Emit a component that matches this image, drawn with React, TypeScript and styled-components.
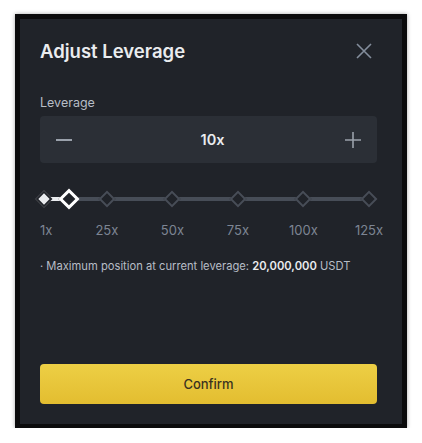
import React from "react";
import styled, { createGlobalStyle } from "styled-components";

const Global = createGlobalStyle`
  html, body { margin: 0; padding: 0; background: #ffffff; }
  body { font-family: Inter, "Noto Sans", sans-serif; }
  * { box-sizing: border-box; }
`;

const Frame = styled.div`
  margin: 14px 0 0 15px;
  width: 392px;
  height: 414px;
  border: 5px solid #0b0b0c;
  border-bottom-width: 4px;
  box-shadow: 0 0 4px rgba(0, 0, 0, 0.35);
  background: #202329;
`;

const Panel = styled.div`
  height: 100%;
  display: flex;
  flex-direction: column;
  padding: 20px 25px 20px 20px;
`;

const Header = styled.div`
  height: 24px;
  display: flex;
  align-items: center;
  justify-content: space-between;
`;

const Title = styled.h1`
  margin: 0;
  font-size: 18.5px;
  font-weight: 600;
  color: #eaecef;
  letter-spacing: 0;
`;

const CloseButton = styled.button`
  width: 24px;
  height: 24px;
  margin-right: 1px;
  padding: 0;
  border: 0;
  background: transparent;
  display: flex;
  align-items: center;
  justify-content: center;
`;

const Label = styled.div`
  margin-top: 32px;
  font-size: 12.5px;
  line-height: 16px;
  color: #b7bdc6;
`;

const Stepper = styled.div`
  margin-top: 5px;
  height: 47px;
  background: #2b2f36;
  border-radius: 4px;
  display: flex;
  align-items: center;
  justify-content: space-between;
  padding: 0 16px;
`;

const StepButton = styled.button`
  width: 16px;
  height: 16px;
  padding: 0;
  border: 0;
  background: transparent;
  display: flex;
  align-items: center;
  justify-content: center;
`;

const Value = styled.div`
  margin-left: 8px;
  font-size: 14.5px;
  font-weight: 600;
  color: #eaecef;
`;

const Slider = styled.div`
  position: relative;
  margin-top: 26px;
  height: 20px;
`;

const Track = styled.div`
  position: absolute;
  left: 4px;
  right: 7px;
  top: 8px;
  height: 4px;
  background: #474d57;
`;

const Fill = styled.div`
  position: absolute;
  left: 0;
  top: 0;
  height: 4px;
  background: #eaecef;
`;

const Mark = styled.div<{ $active?: boolean }>`
  position: absolute;
  top: 2px;
  width: 8px;
  height: 8px;
  transform: translate(-50%, -50%) rotate(45deg);
  background: ${(p) => (p.$active ? "#eaecef" : "#202329")};
  border: 2px solid ${(p) => (p.$active ? "#202329" : "#474d57")};
  box-sizing: content-box;
`;

const Thumb = styled.div`
  position: absolute;
  top: 2px;
  width: 9px;
  height: 9px;
  transform: translate(-50%, -50%) rotate(45deg);
  background: #202329;
  border: 3px solid #ffffff;
  box-sizing: content-box;
`;

const Ticks = styled.div`
  position: relative;
  margin-top: 13px;
  height: 16px;
`;

const Tick = styled.span<{ $first?: boolean }>`
  position: absolute;
  top: 0;
  font-size: 13px;
  line-height: 16px;
  color: #7d8593;
  white-space: nowrap;
  transform: ${(p) => (p.$first ? "none" : "translateX(-50%)")};
`;

const Info = styled.div`
  margin-top: 20px;
  font-size: 11.2px;
  line-height: 16px;
  color: #b7bdc6;
  white-space: nowrap;
`;

const Strong = styled.span`
  font-weight: 600;
  color: #eaecef;
`;

const Confirm = styled.button`
  margin-top: auto;
  height: 40px;
  width: 100%;
  border: 0;
  border-radius: 4px;
  background: linear-gradient(#edcf45, #e3bd30);
  color: #3a3220;
  font-family: inherit;
  font-size: 13px;
  font-weight: 500;
`;

const TRACK_WIDTH = 325;
const marks = [25, 50, 75, 100, 125];
const pos = (v: number) => ((v - 1) / 124) * TRACK_WIDTH;

export default function App() {
  const leverage = 10;
  return (
    <>
      <Global />
      <Frame>
        <Panel>
          <Header>
            <Title>Adjust Leverage</Title>
            <CloseButton aria-label="close">
              <svg width="18" height="18" viewBox="0 0 18 18">
                <path d="M2 2L16 16M16 2L2 16" stroke="#848e9c" strokeWidth="1.6" />
              </svg>
            </CloseButton>
          </Header>
          <Label>Leverage</Label>
          <Stepper>
            <StepButton aria-label="decrease">
              <svg width="16" height="16" viewBox="0 0 16 16">
                <path d="M0 8H16" stroke="#9aa1ab" strokeWidth="2" />
              </svg>
            </StepButton>
            <Value>{leverage}x</Value>
            <StepButton aria-label="increase">
              <svg width="16" height="16" viewBox="0 0 16 16">
                <path d="M0 8H16M8 0V16" stroke="#9aa1ab" strokeWidth="1.6" />
              </svg>
            </StepButton>
          </Stepper>
          <Slider>
            <Track>
              <Fill style={{ width: pos(leverage) }} />
              <Mark $active style={{ left: pos(1) }} />
              {marks.map((m) => (
                <Mark key={m} style={{ left: pos(m) }} />
              ))}
              <Thumb style={{ left: pos(leverage) + 1 }} />
            </Track>
          </Slider>
          <Ticks>
            <Tick $first style={{ left: 0 }}>1x</Tick>
            {marks.map((m) => (
              <Tick key={m} style={{ left: 4 + pos(m) }}>
                {m}x
              </Tick>
            ))}
          </Ticks>
          <Info>
            · Maximum position at current leverage: <Strong>20,000,000</Strong> USDT
          </Info>
          <Confirm>Confirm</Confirm>
        </Panel>
      </Frame>
    </>
  );
}
